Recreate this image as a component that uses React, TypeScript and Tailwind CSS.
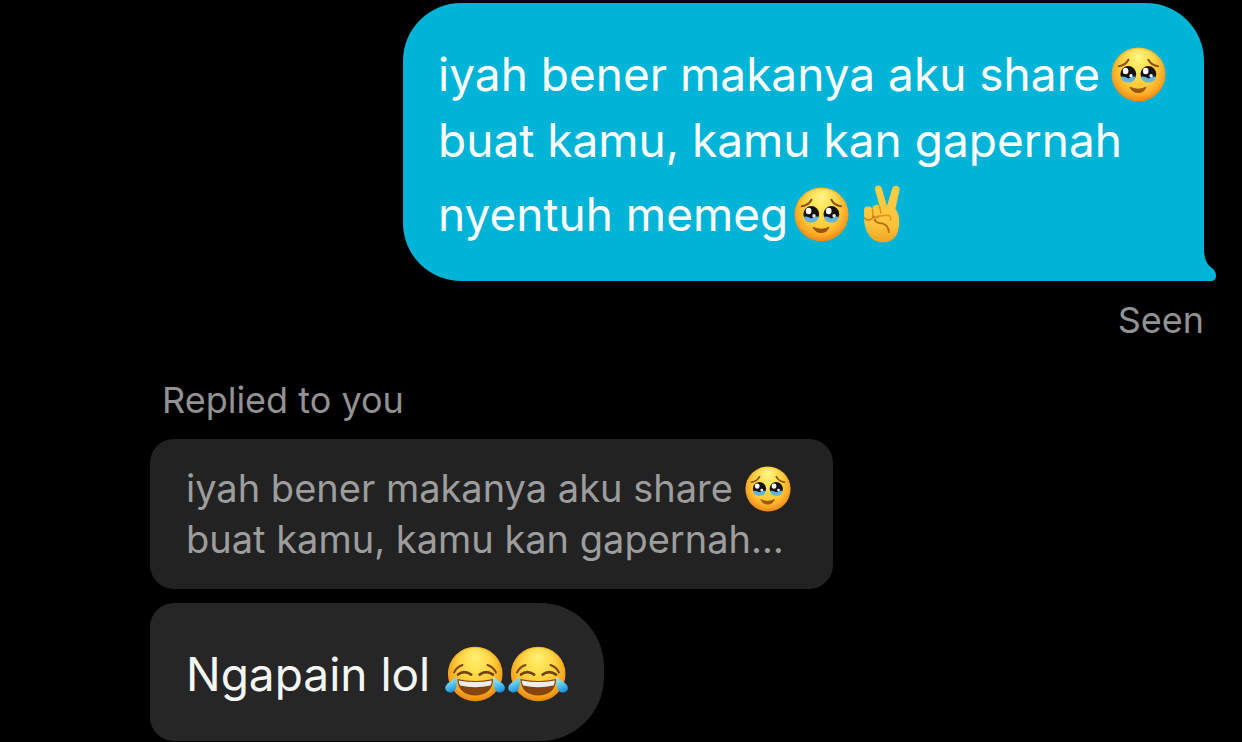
import { useId, type ReactNode } from "react";

function TearfulFace({ className }: { className: string }) {
  const id = useId();
  const face = `${id}-face`;
  const glow = `${id}-glow`;
  return (
    <svg viewBox="0 0 55 55" className={className} role="img" aria-label="Face holding back tears">
      <defs>
        <radialGradient id={face} cx="0.5" cy="0.42" r="0.58">
          <stop offset="0" stopColor="#ffde48" />
          <stop offset="0.55" stopColor="#ffcb38" />
          <stop offset="0.8" stopColor="#fcaa26" />
          <stop offset="1" stopColor="#ea8519" />
        </radialGradient>
        <radialGradient id={glow} cx="0.5" cy="0.16" r="0.5">
          <stop offset="0" stopColor="#fff98a" stopOpacity="0.95" />
          <stop offset="1" stopColor="#ffe650" stopOpacity="0" />
        </radialGradient>
      </defs>
      <circle cx="27.5" cy="27.5" r="27" fill={`url(#${face})`} />
      <circle cx="27.5" cy="27.5" r="26" fill={`url(#${glow})`} />
      <path d="M7.8 19.2 Q14.4 18.6 17.4 12.8 M37.4 12.8 Q40.4 18.6 47 19.2" fill="none" stroke="#8b5211" strokeWidth="2.1" strokeLinecap="round" />
      <g>
        <circle cx="17.3" cy="27" r="7.9" fill="#17100f" />
        <path d="M9.9 29.8 Q13.2 28.8 17.3 31.4 Q21.4 28.8 24.7 29.8 Q23.8 35.6 17.3 35.6 Q10.8 35.6 9.9 29.8Z" fill="#5fb4e2" />
        <ellipse cx="14.6" cy="24" rx="2.8" ry="3.2" fill="#fff" />
        <circle cx="20" cy="28.8" r="1.7" fill="#e8f1f7" />
      </g>
      <g>
        <circle cx="37.4" cy="27" r="7.9" fill="#17100f" />
        <path d="M30 29.8 Q33.3 28.8 37.4 31.4 Q41.5 28.8 44.8 29.8 Q43.9 35.6 37.4 35.6 Q30.9 35.6 30 29.8Z" fill="#5fb4e2" />
        <ellipse cx="34.7" cy="24" rx="2.8" ry="3.2" fill="#fff" />
        <circle cx="40.1" cy="28.8" r="1.7" fill="#e8f1f7" />
      </g>
      <path d="M19 40.2 Q27.2 44.2 35 40.2 Q33 45.6 27.2 45.6 Q21.4 45.6 19 40.2Z" fill="#9b560c" stroke="#9b560c" strokeWidth="1" strokeLinejoin="round" />
    </svg>
  );
}

function JoyFace({ className }: { className: string }) {
  const id = useId();
  const face = `${id}-face`;
  const glow = `${id}-glow`;
  const tear = `${id}-tear`;
  return (
    <svg viewBox="0 0 60 56" className={className} role="img" aria-label="Face with tears of joy">
      <defs>
        <radialGradient id={face} cx="0.5" cy="0.4" r="0.6">
          <stop offset="0" stopColor="#ffdc46" />
          <stop offset="0.55" stopColor="#ffc936" />
          <stop offset="0.82" stopColor="#f8a41e" />
          <stop offset="1" stopColor="#e58314" />
        </radialGradient>
        <radialGradient id={glow} cx="0.5" cy="0.18" r="0.48">
          <stop offset="0" stopColor="#fff47c" stopOpacity="0.9" />
          <stop offset="1" stopColor="#ffe650" stopOpacity="0" />
        </radialGradient>
        <linearGradient id={tear} x1="0" y1="0" x2="0.3" y2="1">
          <stop offset="0" stopColor="#b4effc" />
          <stop offset="0.5" stopColor="#66cff7" />
          <stop offset="1" stopColor="#1f98e0" />
        </linearGradient>
      </defs>
      <circle cx="30.2" cy="28" r="27.3" fill={`url(#${face})`} />
      <circle cx="30.2" cy="28" r="26" fill={`url(#${glow})`} />
      <path d="M9 26.5 Q11.5 21 17.5 19 M42.5 19 Q48.5 21 51 26.5" fill="none" stroke="#7b4710" strokeWidth="1.9" strokeLinecap="round" />
      <path d="M13 28.6 Q19 23.8 26.2 28.6 M34.6 28.6 Q41.2 23.8 48 28.6" fill="none" stroke="#70400d" strokeWidth="2.6" strokeLinecap="round" />
      <path d="M12.4 33 Q30 37 48.2 33 Q47.2 49.4 30.2 49.4 Q13.4 49.4 12.4 33Z" fill="#85450c" />
      <path d="M13.8 34.4 Q30 37.6 46.8 34.4 Q47 37.4 45.4 39.4 Q30.2 43 15.2 39.4 Q13.6 37.4 13.8 34.4Z" fill="#ededed" />
      <path d="M11.4 30.5 C12.6 37 11.8 46.2 5.6 46.4 C0.4 46.6 -1.2 41.8 1.8 38.4 C4.6 35.4 8.6 34.6 11.4 30.5Z" fill={`url(#${tear})`} />
      <path d="M48.8 30.5 C47.6 37 48.4 46.2 54.6 46.4 C59.8 46.6 61.4 41.8 58.4 38.4 C55.6 35.4 51.6 34.6 48.8 30.5Z" fill={`url(#${tear})`} />
    </svg>
  );
}

function VictoryHand({ className }: { className: string }) {
  const id = useId();
  const skin = `${id}-skin`;
  return (
    <svg viewBox="0 0 38 58" className={className} role="img" aria-label="Victory hand">
      <defs>
        <linearGradient id={skin} x1="0" y1="0" x2="0" y2="1">
          <stop offset="0" stopColor="#ffcd45" />
          <stop offset="0.7" stopColor="#fdc23b" />
          <stop offset="1" stopColor="#eda427" />
        </linearGradient>
      </defs>
      <path
        d="M1 24.5 Q1.6 21.4 5 21.6 Q8.4 21.4 9.4 24 Q9.6 20 14 19.8 Q15.6 19.8 16.4 20.6 L12 4.6 Q11.5 1 14.6 0.5 Q17.8 0.1 18.8 3.2 L24 21 L29.4 3 Q30.6 0 34 0.9 Q37.2 1.9 36.5 5 L32.4 24 Q35.8 28 36.2 34.5 Q37 57.4 19.6 57.4 Q9.4 57.4 4.4 47.6 Q1.2 41 1.2 35.5Z"
        fill={`url(#${skin})`}
      />
      <path d="M9.4 24.6 L10 32.8 M16.6 21 L17.8 28" fill="none" stroke="#d88c1d" strokeWidth="1.3" strokeLinecap="round" />
      <path d="M1.4 33 Q4.2 36.4 8.6 34.2 L10.6 31.2 Q12.6 33.6 16 31.4" fill="none" stroke="#c97b16" strokeWidth="1.4" strokeLinecap="round" />
      <path d="M11.6 34.8 Q12.4 31.2 16 31 L24.4 30.2 Q28.4 30.6 27.6 35" fill="none" stroke="#dd9422" strokeWidth="1.4" strokeLinecap="round" />
      <path d="M11.6 34.8 Q14 38.8 19.4 38.4 Q25.4 40.4 25.8 47" fill="none" stroke="#b96c10" strokeWidth="1.8" strokeLinecap="round" />
    </svg>
  );
}

function BubbleTail() {
  return (
    <svg viewBox="0 0 14 34" className="absolute -right-3 bottom-0 h-[34px] w-[14px]" aria-hidden="true">
      <path d="M0 0 H2 C2 11 4 17 10 21 C13 23 14 26 14 29 C14 32 12 34 9 34 H0Z" fill="#00b4d8" />
    </svg>
  );
}

function Line({ className, children }: { className?: string; children: ReactNode }) {
  return <span className={`flex items-center whitespace-nowrap ${className ?? ""}`}>{children}</span>;
}

export default function App() {
  return (
    <main className="flex min-h-screen flex-col bg-black pt-[3px] pr-[38px] pl-[150px] font-['Inter',sans-serif]">
      <section className="flex flex-col items-end">
        <p className="relative rounded-[58px] rounded-br-none bg-[#00b4d8] pt-[38px] pr-[38px] pb-[34px] pl-[35px] text-[46px] leading-[66px] text-white">
          <Line className="gap-[11px]">
            iyah bener makanya aku share
            <TearfulFace className="size-[55px]" />
          </Line>
          <Line>buat kamu, kamu kan gapernah</Line>
          <Line className="mt-2 gap-1.5">
            nyentuh memeg
            <TearfulFace className="size-[55px]" />
            <VictoryHand className="ml-2 h-[58px] w-[38px]" />
          </Line>
          <BubbleTail />
        </p>
        <p className="mt-4 text-[36px] leading-[46px] text-[#929292]">Seen</p>
      </section>

      <section className="mt-[34px] flex flex-col items-start">
        <p className="pl-3 text-[36px] leading-[46px] text-[#929292]">Replied to you</p>
        <blockquote className="mt-4 rounded-[24px] bg-[#222222] py-6 pr-[42px] pl-9 text-[38px] leading-[51px] text-[#9d9d9d]">
          <Line className="gap-3">
            iyah bener makanya aku share
            <TearfulFace className="size-[46px]" />
          </Line>
          <Line>buat kamu, kamu kan gapernah…</Line>
        </blockquote>
        <p className="mt-3.5 rounded-l-[24px] rounded-r-[64px] bg-[#262626] pt-[38px] pr-9 pb-[34px] pl-9 text-[46px] leading-[66px] text-[#f6f6f6]">
          <Line className="gap-[3px]">
            <span className="mr-3">Ngapain lol</span>
            <JoyFace className="h-14 w-[60px]" />
            <JoyFace className="h-14 w-[60px]" />
          </Line>
        </p>
      </section>
    </main>
  );
}
